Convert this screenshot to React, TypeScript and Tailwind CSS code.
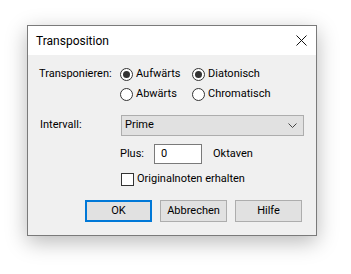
import { useState } from "react";

// Windows-style "Transposition" dialog.
function Radio({ checked, label, onClick }: { checked: boolean; label: string; onClick: () => void }) {
  return (
    <button type="button" onClick={onClick} className="flex h-[20px] items-center gap-[3px]">
      <span className="flex h-[13px] w-[13px] items-center justify-center rounded-full border border-[#333] bg-white">
        {checked && <span className="h-[7px] w-[7px] rounded-full bg-[#333]" />}
      </span>
      <span>{label}</span>
    </button>
  );
}

export default function App() {
  const [dir, setDir] = useState("up");
  const [mode, setMode] = useState("dia");
  const [keep, setKeep] = useState(false);

  return (
    <div
      className="h-[274px] w-[351px] bg-white pl-[27px] pt-[25px] text-[11px] text-black"
      style={{ fontFamily: 'Roboto, "Noto Sans", sans-serif' }}
    >
      <div className="flex h-[211px] w-[290px] flex-col border border-[#7a7a7a] bg-[#f0f0f0] shadow-[0_6px_20px_rgba(0,0,0,0.28)]">
        <div className="flex h-[29px] items-center justify-between bg-white pl-[8px] pr-[9px]">
          <span className="text-[12px]">Transposition</span>
          <svg width="11" height="11" viewBox="0 0 11 11">
            <path d="M0.5 0.5L10.5 10.5M10.5 0.5L0.5 10.5" stroke="#111" strokeWidth="1" />
          </svg>
        </div>

        <div className="flex flex-col pl-[11px] pt-[9px]">
          <div className="flex">
            <span className="w-[81px] leading-[20px]">Transponieren:</span>
            <div className="grid grid-cols-[72px_auto]">
              <Radio checked={dir === "up"} label="Aufwärts" onClick={() => setDir("up")} />
              <Radio checked={mode === "dia"} label="Diatonisch" onClick={() => setMode("dia")} />
              <Radio checked={dir === "down"} label="Abwärts" onClick={() => setDir("down")} />
              <Radio checked={mode === "chr"} label="Chromatisch" onClick={() => setMode("chr")} />
            </div>
          </div>

          <div className="mt-[11px] flex items-center">
            <span className="w-[82px] pl-[1px]">Intervall:</span>
            <div className="flex h-[21px] w-[183px] items-center justify-between border border-[#adadad] bg-[#e1e1e1] pl-[3px] pr-[6px]">
              <span>Prime</span>
              <svg width="9" height="5" viewBox="0 0 9 5">
                <path d="M0.5 0.5L4.5 4.5L8.5 0.5" fill="none" stroke="#444" strokeWidth="1" />
              </svg>
            </div>
          </div>

          <div className="mt-[8px] flex items-center pl-[81px]">
            <span className="w-[34px]">Plus:</span>
            <div className="flex h-[20px] w-[48px] items-center border border-[#7a7a7a] bg-white pl-[6px]">0</div>
            <span className="ml-[11px]">Oktaven</span>
          </div>

          <button
            type="button"
            onClick={() => setKeep(!keep)}
            className="mt-[9px] ml-[82px] flex h-[13px] items-center gap-[3px]"
          >
            <span className="flex h-[13px] w-[13px] items-center justify-center border border-[#333] bg-white">
              {keep && <span className="text-[10px] leading-none">✓</span>}
            </span>
            <span>Originalnoten erhalten</span>
          </button>

          <div className="mt-[14px] flex gap-[8px] pl-[46px]">
            <button type="button" className="h-[22px] w-[67px] border-2 border-[#0078d7] bg-[#e1e1e1]">
              OK
            </button>
            <button type="button" className="h-[22px] w-[67px] border border-[#adadad] bg-[#e1e1e1]">
              Abbrechen
            </button>
            <button type="button" className="h-[22px] w-[67px] border border-[#adadad] bg-[#e1e1e1]">
              Hilfe
            </button>
          </div>
        </div>
      </div>
    </div>
  );
}
